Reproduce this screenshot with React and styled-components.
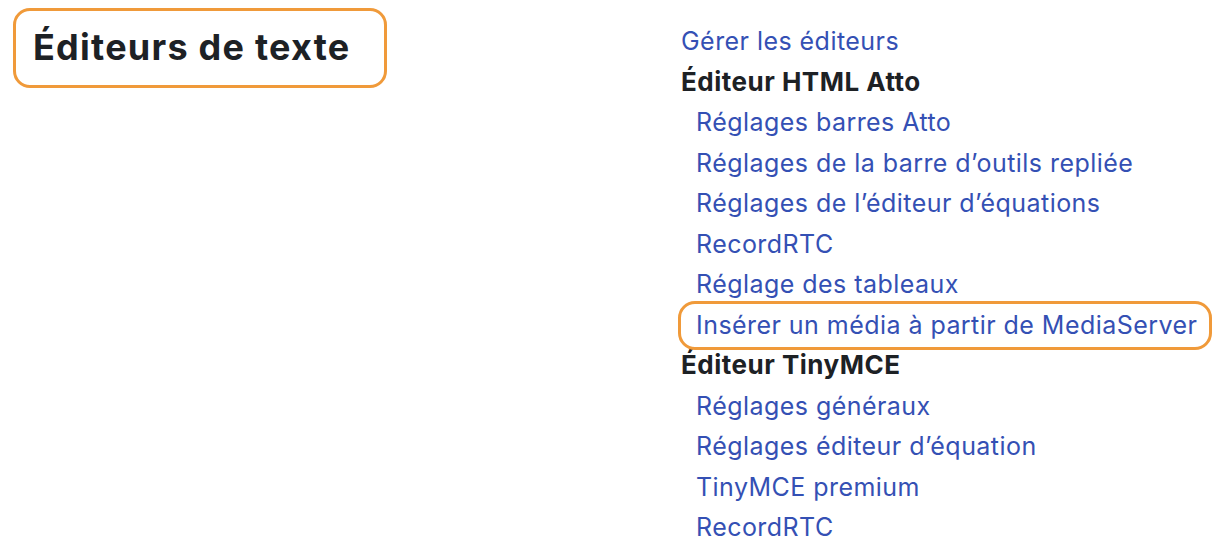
import styled, { createGlobalStyle } from "styled-components";

const GlobalStyle = createGlobalStyle`
  html, body {
    margin: 0;
    padding: 0;
    background: #ffffff;
  }
  body {
    font-family: Inter, "Noto Sans", "Liberation Sans", sans-serif;
    color: #1d2125;
  }
`;

const ORANGE = "#f09a3a";
const LINK = "#3450b4";

const Page = styled.div`
  display: flex;
  flex-direction: row;
  align-items: flex-start;
  width: 1224px;
  height: 552px;
  overflow: hidden;
`;

const TitleBox = styled.div`
  box-sizing: border-box;
  margin: 8px 0 0 13px;
  width: 374px;
  height: 80px;
  border: 3px solid ${ORANGE};
  border-radius: 17px;
  display: flex;
  align-items: center;
  padding-left: 17px;
  padding-bottom: 3px;
`;

const Title = styled.h2`
  margin: 0;
  font-size: 36px;
  font-weight: 700;
  letter-spacing: 1.25px;
  color: #1d2125;
`;

const Menu = styled.ul`
  list-style: none;
  margin: 21px 0 0 294px;
  padding: 0;
  display: flex;
  flex-direction: column;
`;

const Item = styled.li`
  font-size: 25px;
  line-height: 40.5px;
  letter-spacing: 0.45px;
  padding-left: ${(p) => (p.$sub ? "15px" : "0")};
  white-space: nowrap;
`;

const Heading = styled.span`
  font-size: 26px;
  font-weight: 700;
  letter-spacing: 0.5px;
  color: #1d2125;
`;

const Link = styled.a`
  color: ${LINK};
  text-decoration: none;
  position: relative;

  ${(p) =>
    p.$highlight &&
    `
    &::after {
      content: "";
      position: absolute;
      top: -9px;
      bottom: -10px;
      left: -18px;
      right: -15px;
      border: 3px solid ${ORANGE};
      border-radius: 17px;
    }
  `}
`;

const entries = [
  { text: "Gérer les éditeurs" },
  { text: "Éditeur HTML Atto", heading: true },
  { text: "Réglages barres Atto", sub: true },
  { text: "Réglages de la barre d’outils repliée", sub: true },
  { text: "Réglages de l’éditeur d’équations", sub: true },
  { text: "RecordRTC", sub: true },
  { text: "Réglage des tableaux", sub: true },
  { text: "Insérer un média à partir de MediaServer", sub: true, highlight: true },
  { text: "Éditeur TinyMCE", heading: true },
  { text: "Réglages généraux", sub: true },
  { text: "Réglages éditeur d’équation", sub: true },
  { text: "TinyMCE premium", sub: true },
  { text: "RecordRTC", sub: true },
];

export default function App() {
  return (
    <>
      <GlobalStyle />
      <Page>
        <TitleBox>
          <Title>Éditeurs de texte</Title>
        </TitleBox>
        <Menu>
          {entries.map((e, i) => (
            <Item key={i} $sub={e.sub}>
              {e.heading ? (
                <Heading>{e.text}</Heading>
              ) : (
                <Link href="#" $highlight={e.highlight}>
                  {e.text}
                </Link>
              )}
            </Item>
          ))}
        </Menu>
      </Page>
    </>
  );
}
